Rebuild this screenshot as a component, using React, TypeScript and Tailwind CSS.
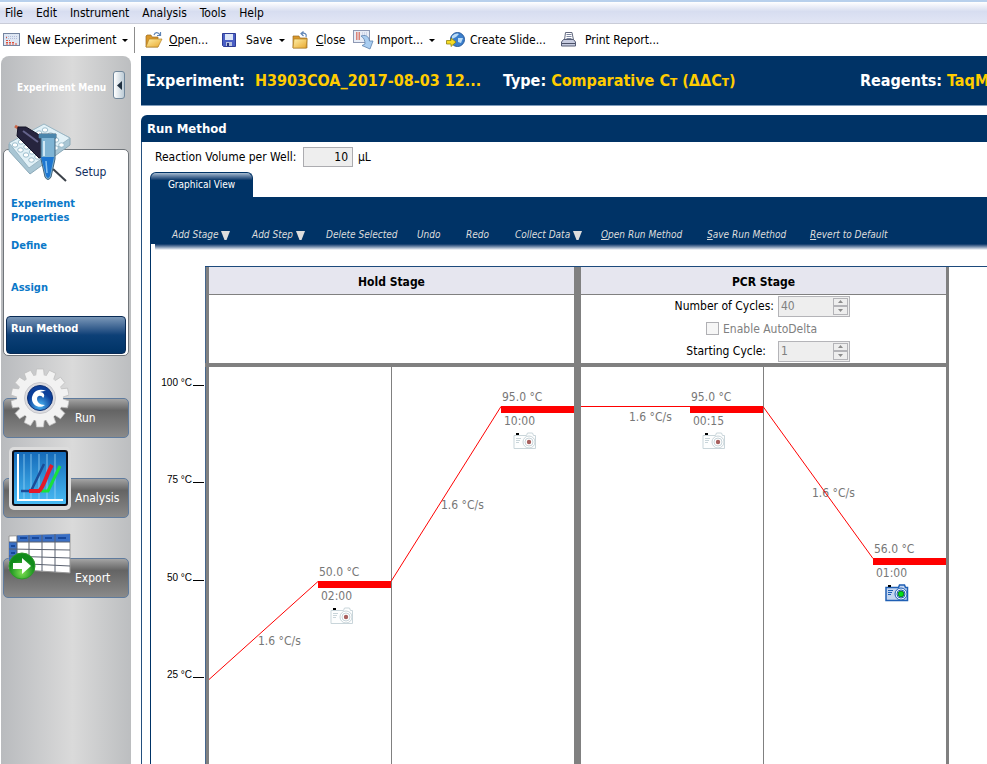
import type { ReactNode } from "react";

const menus = ["File", "Edit", "Instrument", "Analysis", "Tools", "Help"];

function NewIcon() {
  return (
    <svg width="18" height="14" viewBox="0 0 18 14">
      <rect x="0.5" y="0.5" width="16" height="12" fill="#dfe7f3" stroke="#7484a0" />
      <path d="M3 3.5h11M3 5.5h11" stroke="#b3bbd8" strokeDasharray="1 1" />
      <path d="M3 4.500h1M3 7.500h4M3 9.500h8M3 11h11" stroke="#e0503a" strokeDasharray="2 1" />
    </svg>
  );
}

function FolderIcon({ closing = false }: { closing?: boolean }) {
  return (
    <svg width="18" height="18" viewBox="0 0 18 18">
      <defs>
        <linearGradient id="folderGold" x2="1" y2="1">
          <stop offset="0" stopColor="#fff0a8" />
          <stop offset="1" stopColor="#e9a82e" />
        </linearGradient>
      </defs>
      {closing ? (
        <>
          <path d="M1 5h6l1 2h7v10H1z" fill="#d9972a" stroke="#9a6c22" strokeWidth="0.7" />
          <path d="M2 8h13l-1 9H1z" fill="url(#folderGold)" stroke="#b58427" strokeWidth="0.7" />
          <path d="M14 6c1-3-1-4.500-5-3.500M11.500 0.500 9 2.500l2.500 2.500" fill="none" stroke="#5d83b5" strokeWidth="1.200" />
        </>
      ) : (
        <>
          <path d="M1 5 2 4h4l1 2h6v10H1z" fill="#d9972a" stroke="#9a6c22" strokeWidth="0.7" />
          <path d="M4 8h13l-4 8H1z" fill="url(#folderGold)" stroke="#b58427" strokeWidth="0.700" />
          <path d="M9 4c1-3 4-3.500 6 0M15.500 1v3.500h-3.500" fill="none" stroke="#5d83b5" strokeWidth="1.200" />
        </>
      )}
    </svg>
  );
}

function SaveIcon() {
  return (
    <svg width="15" height="15" viewBox="0 0 15 15">
      <path d="M0.500 0.500h13v13h-12l-1-1z" fill="#4a5fc4" stroke="#2e3d97" />
      <path d="M3 1h8v6H3z" fill="#dde6f8" />
      <path d="M4 9h6v4H4z" fill="#b9c3df" />
      <path d="M5 10h2v3H5z" fill="#2b377f" />
    </svg>
  );
}

function ImportIcon() {
  return (
    <svg width="21" height="20" viewBox="0 0 21 20">
      <rect x="0.500" y="0.500" width="16" height="12" fill="#e8edf6" stroke="#8e99b4" />
      <path d="M3 3h4M3 5h4M3 7h4M3 9h4" stroke="#d8604e" strokeWidth="1.500" strokeDasharray="1.500 1" />
      <path d="M9 3h6M9 5h6" stroke="#b9c1dc" strokeDasharray="1 1" />
      <path d="M8 6c4-1.500 8 0 8.500 5H20l-3 8-8-3.500 3-1.500c0-4-1-6-4-8z" fill="#a9cdf0" stroke="#5e83ae" strokeWidth="0.800" />
    </svg>
  );
}

function SlideIcon() {
  return (
    <svg width="20" height="16" viewBox="0 0 20 16">
      <circle cx="11.500" cy="7.500" r="7" fill="#3b7fcd" stroke="#275a9b" />
      <path d="M6 4c3-3 6-3 7-2l-3 3-4 2zM12 6h5l-2 5-3-1z" fill="#bcdcf5" />
      <path d="M0.500 8.500H5V6l5 4-5 4.500V12H0.500z" fill="#f6dc26" stroke="#8f8112" strokeWidth="0.800" />
    </svg>
  );
}

function PrintIcon() {
  return (
    <svg width="16" height="16" viewBox="0 0 16 16">
      <path d="M4.500 0.500H11L12.500 8h-9z" fill="#fff" stroke="#62687e" />
      <path d="M5.500 2.500h5M5.500 4.500h5M5.500 6.500h5" stroke="#7d86a0" />
      <path d="M2.500 7.500h10l2 2.500v4H0.500v-4z" fill="#c7cce0" stroke="#555c75" />
      <path d="M1 11.500h13" stroke="#4b5168" />
    </svg>
  );
}

function Caret() {
  return (
    <svg width="6" height="3" viewBox="0 0 6 3">
      <path d="M0 0h6L3 3z" fill="#000" />
    </svg>
  );
}

function ToolButton({ icon, width, caret, children }: { icon: ReactNode; width: string; caret?: boolean; children: ReactNode }) {
  return (
    <button type="button" className={`flex h-full shrink-0 items-center whitespace-nowrap ${width}`}>
      <span className="flex w-6 shrink-0">{icon}</span>
      <span>{children}</span>
      {caret && (
        <span className="ml-[6px]">
          <Caret />
        </span>
      )}
    </button>
  );
}

function SetupIcon() {
  return (
    <svg width="64" height="62" viewBox="0 0 64 62">
      <path d="M1 21 36 2l26 13v7L22 51 1 28z" fill="#a9c6d4" stroke="#8ba9b8" />
      <path d="M1 20 36 1l26 14-41 30z" fill="#e2f1f7" stroke="#9ab6c4" />
      {[0, 1, 2, 3].map((r) =>
        [0, 1, 2, 3, 4, 5].map((c) => (
          <ellipse key={`${r}-${c}`} cx={7 + c * 6 + r * 5.500} cy={22 - c * 3 + r * 5} rx="2.800" ry="2.200" fill="#fff" stroke="#86aec2" strokeWidth="0.800" />
        )),
      )}
      <path d="m7 3 11 7" stroke="#c9664a" strokeWidth="3" />
      <path d="m10 4 8 0 15 9 4 20-6 2L9 13z" fill="#26243e" stroke="#131225" />
      <path d="m15 8 15 11" stroke="#65648c" strokeWidth="2" />
      <path d="m45 46 13 12" stroke="#3b4149" strokeWidth="2" />
      <path d="M31 11h17v4h-1v21l-4 18q-3 5-6 0l-4-18V15h-2z" fill="#7fb4d4" stroke="#40637d" />
      <path d="M33 34h13l-4 19q-2 4-4 0z" fill="#1d76d1" />
      <path d="M31 11h17v4H31z" fill="#4b86ac" />
      <path d="M36 18v15" stroke="#cfe8f5" strokeWidth="2" />
      <path d="m38 38 1 12" stroke="#86c2f2" strokeWidth="1.500" />
    </svg>
  );
}

function RunIcon() {
  return (
    <svg width="58" height="60" viewBox="-29 -30 58 60">
      <defs>
        <radialGradient id="gearBlue" cx="50%" cy="80%">
          <stop offset="0" stopColor="#4bb8f5" />
          <stop offset="1" stopColor="#0c3f99" />
        </radialGradient>
      </defs>
      {Array.from({ length: 14 }, (_, i) => (
        <path key={i} d="M-4.500-20-3.500-29h7l1 9z" fill="#f2f2f2" stroke="#bdbdbd" strokeWidth="0.700" transform={`rotate(${i * (360 / 14)})`} />
      ))}
      <circle r="23" fill="#f2f2f2" />
      <circle r="15.500" fill="#dcdce0" stroke="#c8c8cc" />
      <circle r="12.500" fill="url(#gearBlue)" stroke="#0c2f73" />
      <path d="M6-7C-2-11-9-5-8 2c1 6 8 9 13 5C0 7-3 4-3 1c0-4 5-4 6-1 3-3 0-6-3-6 2-1 4-1 6-1z" fill="#fff" />
    </svg>
  );
}

function AnalysisIcon() {
  return (
    <svg width="62" height="63" viewBox="0 0 62 63">
      <defs>
        <linearGradient id="plotBlue" x2="0" y2="1">
          <stop offset="0" stopColor="#1468b8" />
          <stop offset="1" stopColor="#49bdf5" />
        </linearGradient>
      </defs>
      <rect width="62" height="63" rx="5" fill="#dcdcdc" />
      <rect x="4" y="4" width="54" height="54" rx="2" fill="url(#plotBlue)" stroke="#0b0b14" strokeWidth="2" />
      <path d="M15 7v45M22 7v45M30 7v45M38 7v45M46 7v45" stroke="#9bd3f5" strokeWidth="0.800" />
      <path d="M9 7v46h45" fill="none" stroke="#fff" strokeWidth="2" />
      <path d="M12 44h10l13-27" fill="none" stroke="#1c4b96" strokeWidth="2.500" />
      <path d="M32 44h7l12-25" fill="none" stroke="#19e03c" strokeWidth="3" />
      <path d="M20 44h10c5-4 8-18 13-26" fill="none" stroke="#e3192b" strokeWidth="4" />
    </svg>
  );
}

function ExportIcon() {
  return (
    <svg width="63" height="48" viewBox="0 0 63 48">
      <defs>
        <radialGradient id="exportGreen" cx="50%" cy="75%">
          <stop offset="0" stopColor="#7ee052" />
          <stop offset="1" stopColor="#118b1c" />
        </radialGradient>
      </defs>
      <path d="M1 3 62 1v39L1 36z" fill="#fff" stroke="#999" />
      <path d="M9 2.500 62 1v8L9 9zM1 9h8v19H1z" fill="#3a6fc4" />
      <path d="M1 9h61M1 16l61 1M1 23l61 2M1 30l61 3M9 3v33M21 2v35M34 2v36M47 1v38" stroke="#5b6270" />
      <path d="M12 5h7M24 5h7M37 5h7M50 5h8M3 13h4M3 20h4" stroke="#17479a" strokeWidth="2" />
      <circle cx="14" cy="33" r="13" fill="url(#exportGreen)" stroke="#2c9a27" />
      <path d="M5 30h9v-5l9 8-9 8v-5H5z" fill="#fff" />
    </svg>
  );
}

function SideButton({ icon, label }: { icon: ReactNode; label: string }) {
  return (
    <button type="button" className="relative h-10 w-full shrink-0 rounded-[5px] border border-[#5f7b9d] bg-linear-to-b from-[#a4a4a4] via-[#646464] via-30% to-[#8a8a8a] text-left text-white">
      {icon}
      <span className="block pl-[71px]">{label}</span>
    </button>
  );
}

function Sidebar() {
  return (
    <nav aria-label="Experiment Menu" className="flex w-[130px] shrink-0 flex-col gap-10 rounded-t-lg bg-linear-to-r from-[#b9bbbe] via-[#dadada] via-55% to-[#bcbec0] px-[2px]">
      <div className="-mb-10 flex h-[93px] shrink-0 items-start justify-between pt-[15px] pr-1 pl-[14px]">
        <span className="pt-[11px] font-[Verdana,'DejaVu_Sans_Condensed',sans-serif] text-[10px] leading-3 font-bold whitespace-nowrap text-white">Experiment Menu</span>
        <button type="button" aria-label="Collapse menu" className="flex h-7 w-3 items-center justify-center rounded-[3px] border border-[#71879b] bg-linear-to-r from-white to-[#bccbd6]">
          <svg width="5" height="9" viewBox="0 0 5 9">
            <path d="M5 0v9L0 4.500z" fill="#203040" />
          </svg>
        </button>
      </div>
      <section className="relative mb-[2px] h-[207px] shrink-0 rounded-[5px] border border-[#70757a] bg-white px-[2px] pt-[14px]">
        <div className="absolute -top-[27px] left-1">
          <SetupIcon />
        </div>
        <h2 className="pl-[69px] leading-4 text-[#12305f]">Setup</h2>
        <div className="flex flex-col pt-[17px] text-[11px] leading-[14px] font-bold text-[#0a78c8]">
          <a href="#properties" className="mb-[14px] w-20 pl-[5px]">Experiment Properties</a>
          <a href="#define" className="mb-7 pl-[5px]">Define</a>
          <a href="#assign" className="mb-[21px] pl-[5px]">Assign</a>
          <a href="#run-method" className="h-[38px] rounded-[4px] border border-[#0a2b55] bg-linear-to-b from-[#7b98b8] via-[#0d4077] via-50% to-[#003366] pt-[5px] pl-1 text-white">Run Method</a>
        </div>
      </section>
      <SideButton label="Run" icon={<span className="absolute -top-[31px] left-[7px]"><RunIcon /></span>} />
      <SideButton label="Analysis" icon={<span className="absolute -top-[32px] left-[5px]"><AnalysisIcon /></span>} />
      <SideButton label="Export" icon={<span className="absolute -top-[26px] left-1"><ExportIcon /></span>} />
    </nav>
  );
}

const methodTools = [
  { key: "A", rest: "dd Stage", arrow: true, width: "w-20" },
  { key: "A", rest: "dd Step", arrow: true, width: "w-[74px]" },
  { key: "D", rest: "elete Selected", width: "w-[91px]" },
  { key: "U", rest: "ndo", width: "w-[49px]" },
  { key: "R", rest: "edo", width: "w-[49px]" },
  { key: "C", rest: "ollect Data", arrow: true, width: "w-[86px]" },
  { key: "O", rest: "pen Run Method", mnemonic: true, width: "w-[106px]" },
  { key: "S", rest: "ave Run Method", mnemonic: true, width: "w-[103px]" },
  { key: "R", rest: "evert to Default", mnemonic: true, width: "w-[103px]" },
];

function Spinner({ id, value }: { id: string; value: string }) {
  return (
    <span className="flex h-[21px] w-[72px] border border-[#b4b4b8] bg-[#eeeeee] p-px">
      <input id={id} value={value} disabled readOnly className="w-0 min-w-0 flex-1 pl-px text-[#808080]" />
      <span className="flex w-[15px] flex-col">
        {["Increase", "Decrease"].map((name, i) => (
          <button key={name} type="button" disabled aria-label={name} className="flex flex-1 items-center justify-center border border-[#b4b4b8]">
            <svg width="5" height="3" viewBox="0 0 5 3">
              <path d={i === 0 ? "M0 3h5L2.500 0z" : "M0 0h5L2.500 3z"} fill="#8c8c8c" />
            </svg>
          </button>
        ))}
      </span>
    </span>
  );
}

function Camera({ x, y, active }: { x: number; y: number; active?: boolean }) {
  const line = active ? "#1f5fb4" : "#c9d5da";
  return (
    <g transform={`translate(${x} ${y})`}>
      <path d="M1 3.500h12.500l1-2.500h5l1 2.500h2v13H1z" fill={active ? "#c4d6f0" : "#fdfefe"} stroke={line} strokeWidth={active ? 1.500 : 1} />
      <path d="M3 6.500h5M3 8.500h4M3 10.500h3" stroke={line} />
      <rect x="3" y="1" width="3" height="2" fill="#000" />
      <circle cx="16" cy="10" r="6" fill={active ? "#e4edf8" : "#fff"} stroke={line} />
      <circle cx="16" cy="10" r="4" fill="none" stroke={line} />
      <circle cx="16" cy="10" r={active ? 2.800 : 2.200} fill={active ? "#00e01a" : "#a8605e"} stroke={active ? "#0a7d1a" : "none"} />
    </g>
  );
}

const steps = [
  { x: 167, y: 214, temp: "50.0 °C", time: "02:00", rate: "1.6 °C/s", rateX: 107, rateY: 278, from: [58, 312] },
  { x: 350, y: 39, temp: "95.0 °C", time: "10:00", rate: "1.6 °C/s", rateX: 290, rateY: 142, from: [240, 214] },
  { x: 539, y: 39, temp: "95.0 °C", time: "00:15", rate: "1.6 °C/s", rateX: 478, rateY: 54, from: [430, 39] },
  { x: 722, y: 191, temp: "56.0 °C", time: "01:00", rate: "1.6 °C/s", rateX: 661, rateY: 130, from: [612, 39], active: true },
];

const ticks = [
  { label: "100 °C", y: 18 },
  { label: "75 °C", y: 115 },
  { label: "50 °C", y: 213 },
  { label: "25 °C", y: 310 },
];

function Plot() {
  return (
    <svg width="798" height="420" className="block shrink-0" role="img" aria-label="Temperature profile">
      <path d="M54 0h1v420h-1z" fill="#46678d" />
      <path d="M55 0h3v420h-3zM423 0h7v420h-7zM795 0h3v420h-3z" fill="#808080" />
      <path d="M240.500 0v420M612.500 0v420" stroke="#808080" />
      {ticks.map((t) => (
        <g key={t.label}>
          <text x="41" y={t.y + 1} textAnchor="end" className="font-['Liberation_Sans',sans-serif] text-[10px]">{t.label}</text>
          <path d={`M42 ${t.y + 0.500}h11`} stroke="#000" />
        </g>
      ))}
      {steps.map((s) => (
        <g key={s.x} fill="#777777">
          <text x={s.rateX} y={s.rateY}>{s.rate}</text>
          <path d={`M${s.from[0]} ${s.from[1] + 0.500}L${s.x} ${s.y + 0.500}`} stroke="#ff0000" />
          <rect x={s.x} y={s.y} width="73" height="7" fill="#ff0000" />
          <text x={s.x + 1} y={s.y - 5}>{s.temp}</text>
          <text x={s.x + 3} y={s.y + 19}>{s.time}</text>
          <Camera x={s.x + 12} y={s.y + 26} active={s.active} />
        </g>
      ))}
    </svg>
  );
}

const heading = "h-7 border-b border-[#808080] bg-[#e6e6ef] text-center leading-[30px] font-bold";

export default function App() {
  return (
    <div className="flex h-screen flex-col overflow-hidden bg-white font-[Tahoma,'DejaVu_Sans_Condensed',sans-serif] text-xs text-black">
      <header className="shrink-0">
        <div role="menubar" className="flex h-6 items-center gap-[13px] border-t-2 border-b border-t-[#b8d0ec] border-b-[#c9ccd8] bg-linear-to-b from-white via-[#d7ddf0] via-45% to-[#e2e6f5] pl-[5px]">
          {menus.map((m) => (
            <button key={m} type="button" role="menuitem">{m}</button>
          ))}
        </div>
        <div className="flex h-8 items-center pl-[3px]">
          <ToolButton icon={<NewIcon />} width="w-[131px]" caret>New Experiment</ToolButton>
          <div className="mr-[10px] h-[26px] w-px shrink-0 bg-[#8c8c8c]" />
          <ToolButton icon={<FolderIcon />} width="w-[77px]"><u>O</u>pen...</ToolButton>
          <ToolButton icon={<SaveIcon />} width="w-[70px]" caret>Save</ToolButton>
          <ToolButton icon={<FolderIcon closing />} width="w-[61px]"><u>C</u>lose</ToolButton>
          <ToolButton icon={<ImportIcon />} width="w-[93px]" caret>Import...</ToolButton>
          <ToolButton icon={<SlideIcon />} width="w-[115px]">Create Slide...</ToolButton>
          <ToolButton icon={<PrintIcon />} width="w-[115px]">Print Report...</ToolButton>
        </div>
      </header>
      <div className="flex min-h-0 flex-1 gap-[10px] pl-px">
        <Sidebar />
        <main className="flex min-w-0 flex-1 flex-col">
          <div className="mb-[9px] flex h-[50px] shrink-0 items-center overflow-hidden border-b border-[#7f9cbb] bg-[#003366] pl-[5px] text-[16px] font-bold whitespace-nowrap text-white">
            <p className="w-[357px] shrink-0">Experiment: <span className="ml-[5px] text-[#ffcc00]">H3903COA_2017-08-03 12...</span></p>
            <p className="w-[357px] shrink-0">Type: <span className="text-[#ffcc00]">Comparative C<span className="text-[14px]">ᴛ</span> (ΔΔC<span className="text-[14px]">ᴛ</span>)</span></p>
            <p className="shrink-0">Reagents: <span className="text-[#ffcc00]">TaqMan</span></p>
          </div>
          <section className="flex min-h-0 flex-1 flex-col">
            <h1 className="h-[27px] shrink-0 rounded-tl-md bg-[#003366] pl-[6px] text-[13px] leading-[28px] font-bold text-white">Run Method</h1>
            <div className="flex min-h-0 flex-1 flex-col border-l border-[#24507f] pl-2">
              <div className="flex h-[30px] shrink-0 items-center pl-[5px]">
                <label htmlFor="volume" className="w-[148px] whitespace-nowrap">Reaction Volume per Well:</label>
                <input id="volume" defaultValue="10" className="h-5 w-[50px] border border-[#acacb0] bg-[#eeeeee] pr-1 text-right" />
                <span className="pl-[5px]">μL</span>
              </div>
              <div role="tablist" className="shrink-0">
                <button type="button" role="tab" aria-selected="true" className="block h-[25px] w-[103px] rounded-t-md border-x border-t border-[#003366] bg-linear-to-b from-[#a9bdd2] to-[#003366] to-30% text-[10px] text-white">Graphical View</button>
              </div>
              <div className="flex min-h-0 flex-1 flex-col border-l border-[#003366]">
                <div className="h-[47px] shrink-0 overflow-hidden bg-[#003366] pt-[30px] pl-[21px]">
                  <div role="toolbar" className="flex text-[10px] leading-4 text-[#dddddd] italic">
                    {methodTools.map((t) => (
                      <button key={t.key + t.rest} type="button" className={`flex shrink-0 items-center whitespace-nowrap ${t.width}`}>
                        <span><span className={t.mnemonic ? "underline" : ""}>{t.key}</span>{t.rest}</span>
                        {t.arrow && (
                          <svg width="9" height="9" viewBox="0 0 9 9" className="ml-[3px]">
                            <path d="M0 0h9L5.500 9h-2z" fill="#dddddd" />
                          </svg>
                        )}
                      </button>
                    ))}
                  </div>
                </div>
                <div className="ml-1 h-[6px] shrink-0 bg-linear-to-b from-[#003366] to-white" />
                <div className="mt-4 ml-[54px] shrink-0 border-t border-[#1d4a7c]">
                  <div className="flex w-[744px] border-l border-[#46678d]">
                    <div className="flex flex-1 border-x-3 border-[#808080]">
                      <section className="flex w-[365px] shrink-0 flex-col">
                        <h2 className={heading}>Hold Stage</h2>
                      </section>
                      <div className="w-[7px] shrink-0 bg-[#808080]" />
                      <section className="w-[365px] shrink-0">
                        <h2 className={heading}>PCR Stage</h2>
                        <div className="flex h-[68px] flex-col">
                          <div className="flex h-[22px] items-center">
                            <label htmlFor="cycles" className="w-[197px] pr-1 text-right">Number of Cycles:</label>
                            <Spinner id="cycles" value="40" />
                          </div>
                          <div className="flex h-[23px] items-center pl-[125px]">
                            <input id="delta" type="checkbox" disabled className="size-[13px] appearance-none border border-[#b0b0b4] bg-[#f6f6f6]" />
                            <label htmlFor="delta" className="pl-1 text-[#808080]">Enable AutoDelta</label>
                          </div>
                          <div className="flex h-[22px] items-center">
                            <label htmlFor="start" className="w-[197px] pr-3 text-right">Starting Cycle:</label>
                            <Spinner id="start" value="1" />
                          </div>
                        </div>
                      </section>
                    </div>
                  </div>
                  <div className="h-1 w-[744px] bg-[#808080]" />
                </div>
                <Plot />
              </div>
            </div>
          </section>
        </main>
      </div>
    </div>
  );
}
